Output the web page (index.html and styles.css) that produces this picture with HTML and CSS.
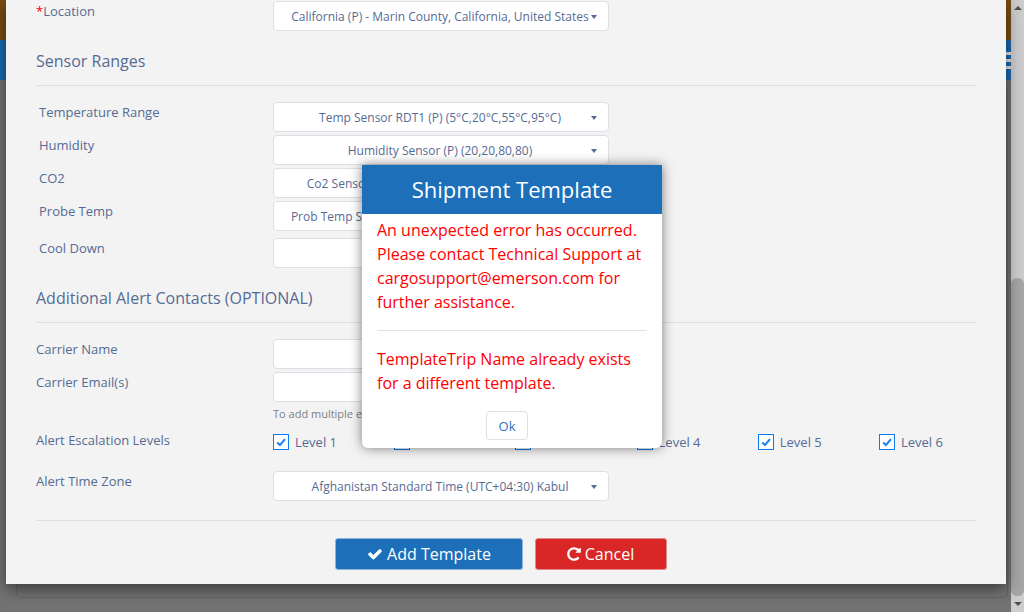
FILE: index.html
```html
<!DOCTYPE html>
<html lang="en">

<head>
    <meta charset="UTF-8">
    <meta name="viewport" content="width=device-width, initial-scale=1.0">
    <title>Shipment Template</title>
    <link rel="stylesheet" href="styles.css">
</head>

<body>
    <div class="screen">
        <div class="page">
            <div class="top-banner"></div>
            <div class="nav-bar">
                <div class="menu-toggle"><span></span><span></span><span></span></div>
            </div>
            <div class="page-body">
                <div class="page-card"></div>
            </div>
        </div>

        <div class="scrollbar">
            <div class="scroll-btn"><span class="arrow-up"></span></div>
            <div class="scroll-track"><div class="scroll-thumb"></div></div>
            <div class="scroll-btn"><span class="arrow-down"></span></div>
        </div>

        <!-- template form, scrolled down -->
        <div class="modal">
            <div class="row">
                <label class="field-label"><span class="req">*</span>Location</label>
                <div class="pick">California (P) - Marin County, California, United States<span class="caret"></span></div>
            </div>

            <h4 class="section-title">Sensor Ranges</h4>
            <div class="row row-indent">
                <label class="field-label">Temperature Range</label>
                <div class="pick">Temp Sensor RDT1 (P) (5°C,20°C,55°C,95°C)<span class="caret"></span></div>
            </div>
            <div class="row row-indent">
                <label class="field-label">Humidity</label>
                <div class="pick">Humidity Sensor (P) (20,20,80,80)<span class="caret"></span></div>
            </div>
            <div class="row row-indent">
                <label class="field-label">CO2</label>
                <div class="pick">Co2 Sensor RDT1 (P) (0,1000,5000,10000,20000)<span class="caret"></span></div>
            </div>
            <div class="row row-indent">
                <label class="field-label">Probe Temp</label>
                <div class="pick">Prob Temp Sensor RDT1 (P) (-20°C,0°C,30°C,60°C,8°C)<span class="caret"></span></div>
            </div>
            <div class="row row-indent row-cool">
                <label class="field-label">Cool Down</label>
                <div class="pick"><span class="caret"></span></div>
            </div>

            <h4 class="section-title">Additional Alert Contacts (OPTIONAL)</h4>
            <div class="row">
                <label class="field-label">Carrier Name</label>
                <div class="text-box"></div>
            </div>
            <div class="row row-tight">
                <label class="field-label">Carrier Email(s)</label>
                <div class="text-box"></div>
            </div>
            <p class="hint">To add multiple emails, separate them with a comma</p>

            <div class="row row-levels">
                <label class="field-label">Alert Escalation Levels</label>
                <div class="levels">
                    <div class="level"><span class="check"><svg viewBox="0 0 14 14"><path d="M3.2 7.4 6 10 11 4.2"/></svg></span>Level 1</div>
                    <div class="level"><span class="check"><svg viewBox="0 0 14 14"><path d="M3.2 7.4 6 10 11 4.2"/></svg></span>Level 2</div>
                    <div class="level"><span class="check"><svg viewBox="0 0 14 14"><path d="M3.2 7.4 6 10 11 4.2"/></svg></span>Level 3</div>
                    <div class="level"><span class="check"><svg viewBox="0 0 14 14"><path d="M3.2 7.4 6 10 11 4.2"/></svg></span>Level 4</div>
                    <div class="level"><span class="check"><svg viewBox="0 0 14 14"><path d="M3.2 7.4 6 10 11 4.2"/></svg></span>Level 5</div>
                    <div class="level"><span class="check"><svg viewBox="0 0 14 14"><path d="M3.2 7.4 6 10 11 4.2"/></svg></span>Level 6</div>
                </div>
            </div>

            <div class="row">
                <label class="field-label">Alert Time Zone</label>
                <div class="pick">Afghanistan Standard Time (UTC+04:30) Kabul<span class="caret"></span></div>
            </div>

            <div class="form-actions">
                <button class="btn btn-add">
                    <svg class="btn-icon" viewBox="0 0 1792 1792"><path d="M1671 566q0 40-28 68l-724 724-136 136q-28 28-68 28t-68-28l-136-136-362-362q-28-28-28-68t28-68l136-136q28-28 68-28t68 28l294 295 656-657q28-28 68-28t68 28l136 136q28 28 28 68z"/></svg>
                    Add Template
                </button>
                <button class="btn btn-cancel">
                    <svg class="btn-icon" viewBox="0 0 1792 1792"><path d="M1664 256v448q0 26-19 45t-45 19h-448q-42 0-59-40-17-39 14-69l138-138q-148-137-349-137-104 0-198.5 40.5t-163.5 109.5-109.5 163.5-40.5 198.5 40.5 198.5 109.5 163.5 163.5 109.5 198.5 40.5q119 0 225-52t179-147q7-10 23-12 15 0 25 9l137 138q9 8 9.5 20.5t-7.5 22.5q-109 132-264 204.5t-327 72.5q-156 0-298-61t-245-164-164-245-61-298 61-298 164-245 245-164 298-61q147 0 284.5 55.5t244.5 156.5l130-129q29-31 70-14 39 17 39 59z"/></svg>
                    Cancel
                </button>
            </div>
        </div>

        <!-- error popup over the form -->
        <div class="dialog">
            <div class="dialog-head">Shipment Template</div>
            <div class="dialog-body">
                <p>An unexpected error has occurred. Please contact Technical Support at cargosupport@emerson.com for further assistance.</p>
                <hr class="dialog-rule">
                <p>TemplateTrip Name already exists for a different template.</p>
            </div>
            <div class="dialog-foot"><button class="btn-ok">Ok</button></div>
        </div>
    </div>
</body>

</html>
```

FILE: styles.css
```css
html,
body {
    margin: 0;
    padding: 0;
    height: 100%;
    overflow: hidden;
}

body {
    font-family: "Open Sans", "Liberation Sans", sans-serif;
    font-size: 13px;
    color: #566b94;
}

.screen {
    display: flex;
    width: 1024px;
    height: 612px;
    overflow: hidden;
    position: relative;
}

/* dimmed page behind the modal */
.page {
    flex: 1;
    display: flex;
    flex-direction: column;
    background-color: #737373;
}

.top-banner {
    height: 40px;
    background-color: #7a4d12;
}

.nav-bar {
    height: 40px;
    background-color: #1a6ab0;
    display: flex;
    justify-content: flex-end;
}

.menu-toggle {
    width: 5px;
    padding-top: 12px;
    display: flex;
    flex-direction: column;
    gap: 4px;
}

.menu-toggle span {
    height: 3px;
    background-color: #e4e4e4;
}

.page-body {
    flex: 1;
    padding: 8px 3px 14px 16px;
    display: flex;
}

.page-card {
    flex: 1;
    border: 1px solid #666;
    border-radius: 4px;
}

.scrollbar {
    width: 13px;
    background-color: #cdcdcd;
    display: flex;
    flex-direction: column;
}

.scroll-btn {
    height: 16px;
    display: flex;
    align-items: center;
    justify-content: center;
}

.arrow-up {
    border: 4px solid transparent;
    border-top: 0;
    border-bottom: 4px solid #505050;
}

.arrow-down {
    border: 4px solid transparent;
    border-bottom: 0;
    border-top: 4px solid #505050;
}

.scroll-track {
    flex: 1;
    padding-top: 262px;
    display: flex;
}

.scroll-thumb {
    flex: 1;
    background-color: #a6a6a6;
    border-radius: 6px;
}

.modal {
    position: absolute;
    left: 6px;
    top: 0;
    width: 1000px;
    height: 584px;
    box-sizing: border-box;
    padding: 1px 30px 0;
    background-color: #f3f3f3;
    box-shadow: 0 5px 15px rgba(0, 0, 0, 0.5);
}

.row {
    display: flex;
    margin-bottom: 3px;
}

.row-indent .field-label {
    padding-left: 3px;
    width: 234px;
}

.row-cool {
    margin-top: 7px;
}

.field-label {
    width: 237px;
    flex-shrink: 0;
    line-height: 20px;
    height: 20px;
}

.req {
    color: #ff0000;
}

.pick,
.text-box {
    width: 336px;
    height: 30px;
    box-sizing: border-box;
    background-color: #fff;
    border: 1px solid #dcdfe6;
    border-radius: 4px;
}

.pick {
    position: relative;
    padding: 0 12px 0 10px;
    font-size: 12px;
    line-height: 30px;
    text-align: center;
    white-space: nowrap;
    overflow: hidden;
}

.caret {
    position: absolute;
    right: 11px;
    top: 13px;
    border: 3.5px solid transparent;
    border-bottom: 0;
    border-top: 4px solid #566b94;
}

.section-title {
    margin: 20px 0 16px;
    padding-bottom: 14px;
    border-bottom: 1px solid #dedede;
    font-size: 16px;
    font-weight: 400;
    line-height: 20px;
}

.hint {
    margin: 0 0 10px 237px;
    font-size: 11px;
    line-height: 18px;
    color: #7b8087;
}

.row-levels {
    margin-bottom: 17px;
    height: 21px;
}

.row-levels .field-label {
    margin-top: -3px;
}

.levels {
    display: grid;
    grid-template-columns: repeat(6, 121.2px);
}

.level {
    display: flex;
    align-items: center;
    gap: 6px;
    height: 16px;
    margin-top: 1px;
}

.check {
    width: 16px;
    height: 16px;
    box-sizing: border-box;
    border: 1px solid #0d7bf0;
    background-color: #fff;
    display: flex;
}

.check svg {
    width: 14px;
    height: 14px;
    fill: none;
    stroke: #1a82f0;
    stroke-width: 2;
}

.form-actions {
    margin-top: 19px;
    border-top: 1px solid #dedede;
    padding: 17px 10px 0 0;
    display: flex;
    justify-content: center;
    gap: 12px;
}

.btn {
    height: 32px;
    border: 1px solid #8fb4d6;
    border-radius: 3px;
    color: #fff;
    font-family: inherit;
    font-size: 16px;
    display: flex;
    align-items: center;
    justify-content: center;
    gap: 4px;
    padding: 0;
    cursor: pointer;
}

.btn-add {
    width: 188px;
    background-color: #1c6fb8;
}

.btn-cancel {
    width: 132px;
    background-color: #d92727;
    border-color: #e28a8a;
    gap: 3px;
    padding-right: 2px;
}

.btn-icon {
    width: 16px;
    height: 16px;
    fill: #fff;
}

.dialog {
    position: absolute;
    left: 362px;
    top: 165px;
    width: 300px;
    height: 283px;
    background-color: #fff;
    border-radius: 0 0 6px 6px;
    box-shadow: 0 0 12px rgba(0, 0, 0, 0.5);
}

.dialog-head {
    height: 49px;
    background-color: #1c6fb8;
    color: #fff;
    font-size: 22px;
    line-height: 48px;
    text-align: center;
}

.dialog-body {
    padding: 4px 15px 0;
    font-size: 16px;
    line-height: 24px;
    color: #ff0000;
}

.dialog-body p {
    margin: 0;
}

.dialog-rule {
    margin: 16px 0;
    border: 0;
    border-top: 1px solid #e2e2e2;
}

.dialog-foot {
    display: flex;
    justify-content: center;
    padding: 16px 10px 0 0;
}

.btn-ok {
    width: 42px;
    height: 29px;
    background-color: #fff;
    border: 1px solid #dcdfe6;
    border-radius: 4px;
    color: #2f6fc0;
    font-family: inherit;
    font-size: 13px;
    padding: 0;
    cursor: pointer;
}
```
